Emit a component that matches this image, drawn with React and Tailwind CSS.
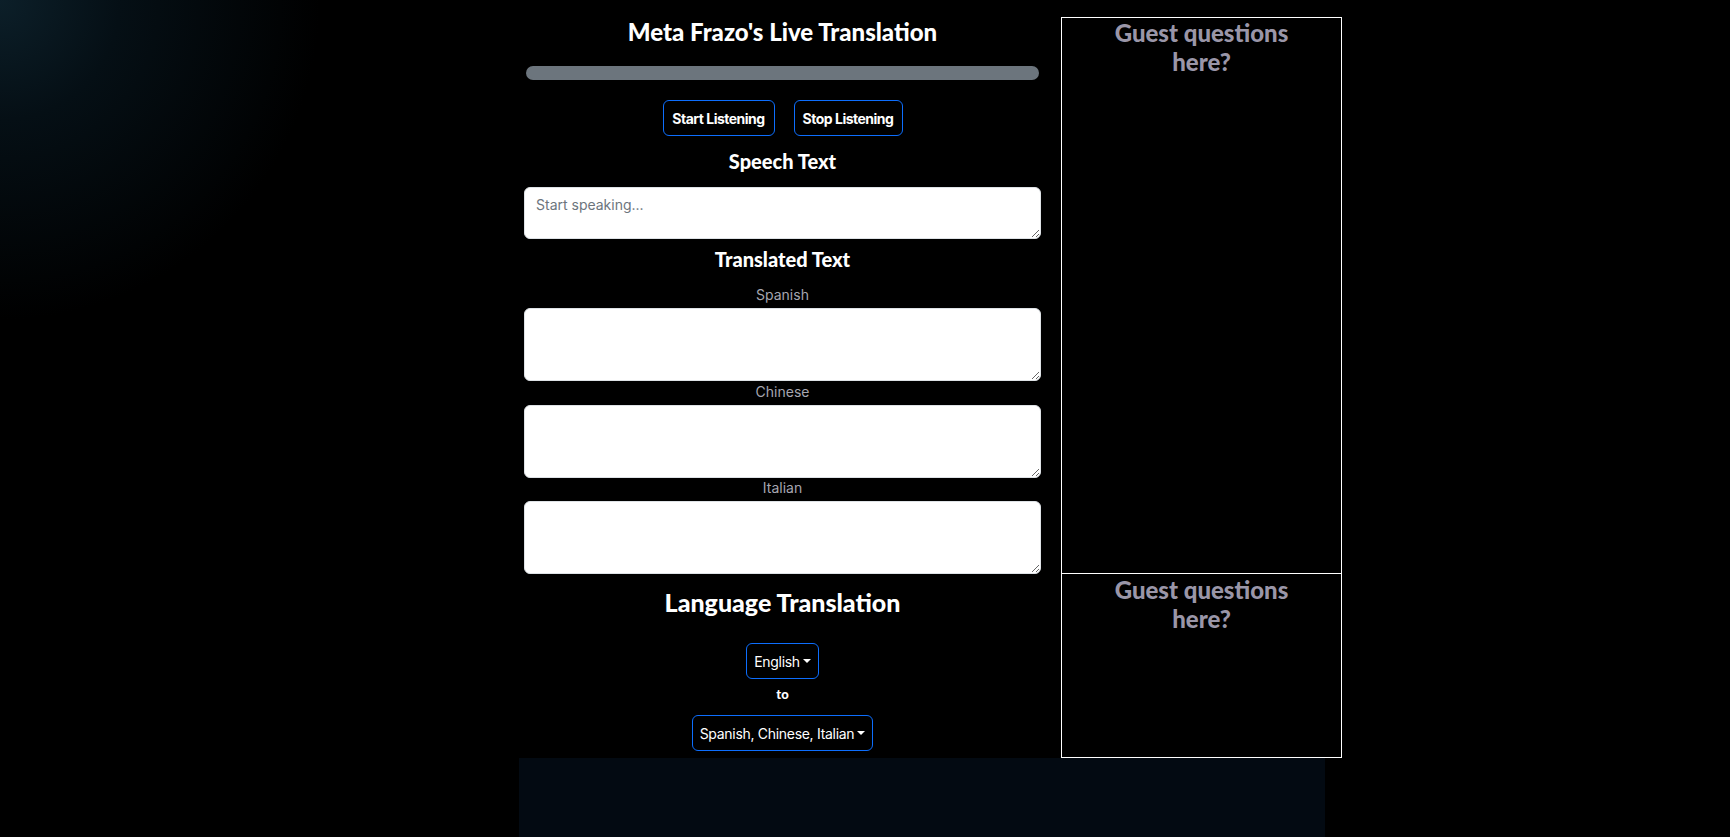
import React from "react";

const heading = { fontFamily: "Lato, 'Noto Sans', sans-serif" };

function Dropdown({ label, className }) {
  return (
    <button
      className={`flex items-center rounded-[6px] border border-[#0d6efd] bg-black px-[7px] text-[14px] text-white ${className}`}
      style={{ fontFamily: "Inter, sans-serif" }}
    >
      <span className="tracking-[-0.3px]">{label}</span>
      <span className="ml-[3px] inline-block h-0 w-0 border-x-[4px] border-t-[4px] border-x-transparent border-t-white" />
    </button>
  );
}

function Area({ h, placeholder }) {
  return (
    <textarea
      placeholder={placeholder}
      className={`mx-[5px] block w-[517px] rounded-[6px] border border-[#dee2e6] bg-white px-[11px] py-[6px] text-[14px] text-black placeholder:text-[#6c757d] ${h}`}
      style={{ fontFamily: "Inter, sans-serif" }}
    />
  );
}

function Label({ children }) {
  return (
    <div
      className="text-center text-[14px] leading-[20px] text-[#a6a6b0]"
      style={{ fontFamily: "Inter, sans-serif" }}
    >
      {children}
    </div>
  );
}

export default function App() {
  return (
    <div className="min-h-[837px] w-full overflow-hidden bg-black bg-[radial-gradient(circle_at_0_0,#0c1f29_0px,#050f15_120px,#000_320px)]">
      <div className="flex pl-[519px] pt-[16px]">
        {/* Left column */}
        <div className="flex w-[527px] flex-col">
          <h1
            className="pt-[2px] text-center text-[24px] font-[900] leading-[28px] text-white"
            style={heading}
          >
            Meta Frazo's Live Translation
          </h1>
          <div className="mx-[7px] mt-[20px] h-[14px] rounded-full bg-[#6c757d]" />
          <div className="mt-[20px] flex justify-center gap-[19px]" style={{ fontFamily: "Inter, sans-serif" }}>
            <button className="h-[36px] w-[112px] rounded-[6px] border border-[#0d6efd] bg-black text-[14px] font-bold tracking-[-0.5px] text-white">
              Start Listening
            </button>
            <button className="h-[36px] w-[109px] rounded-[6px] border border-[#0d6efd] bg-black text-[14px] font-bold tracking-[-0.5px] text-white">
              Stop Listening
            </button>
          </div>
          <h2
            className="mt-[13px] text-center text-[20px] font-[900] leading-[24px] text-white"
            style={heading}
          >
            Speech Text
          </h2>
          <div className="mt-[14px]">
            <Area h="h-[52px]" placeholder="Start speaking..." />
          </div>
          <h2
            className="mt-[8px] text-center text-[20px] font-[900] leading-[24px] text-white"
            style={heading}
          >
            Translated Text
          </h2>
          <div className="mt-[14px]">
            <Label>Spanish</Label>
          </div>
          <div className="mt-[3px]">
            <Area h="h-[73px]" />
          </div>
          <div className="mt-[1px]">
            <Label>Chinese</Label>
          </div>
          <div className="mt-[3px]">
            <Area h="h-[73px]" />
          </div>
          <div>
            <Label>Italian</Label>
          </div>
          <div className="mt-[3px]">
            <Area h="h-[73px]" />
          </div>
          <h2
            className="mt-[12px] text-center text-[25px] font-[900] leading-[32px] text-white"
            style={heading}
          >
            Language Translation
          </h2>
          <div className="mt-[25px] flex justify-center">
            <Dropdown label="English" className="h-[36px]" />
          </div>
          <div
            className="mt-[6px] text-center text-[13px] font-[900] leading-[18px] text-white"
            style={heading}
          >
            to
          </div>
          <div className="mt-[12px] flex justify-center">
            <Dropdown label="Spanish, Chinese, Italian" className="h-[36px]" />
          </div>
        </div>

        {/* Right column */}
        <div className="ml-[15px] mt-[1px] flex w-[281px] flex-col">
          <div className="h-[557px] border border-white bg-black">
            <div
              className="px-[40px] text-center text-[24px] font-[900] leading-[29px] text-[#9a96a8]"
              style={heading}
            >
              Guest questions here?
            </div>
          </div>
          <div className="h-[184px] border border-t-0 border-white bg-black pt-[1px]">
            <div
              className="px-[40px] text-center text-[24px] font-[900] leading-[29px] text-[#9a96a8]"
              style={heading}
            >
              Guest questions here?
            </div>
          </div>
        </div>
      </div>
      <div className="ml-[519px] h-[200px] w-[806px] bg-[#030a12]" />
    </div>
  );
}
